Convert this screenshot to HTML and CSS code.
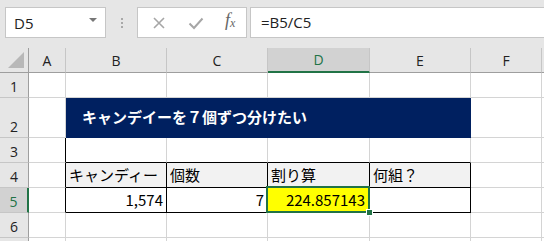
FILE: index.html
```html
<!DOCTYPE html>
<html lang="ja">
<head>
  <meta charset="UTF-8">
  <title>Excel</title>
  <link rel="stylesheet" href="styles.css">
</head>
<body>
  <div class="toolbar">
    <div class="name-box">
      <span>D5</span>
      <span class="caret"></span>
    </div>
    <div class="grip"><i></i><i></i><i></i></div>
    <div class="fx-buttons">
      <svg class="icon" width="14" height="14" viewBox="0 0 14 14"><path d="M2 2 L12 12 M12 2 L2 12" stroke="#a6a6a6" stroke-width="1.6" fill="none"/></svg>
      <svg class="icon" width="16" height="14" viewBox="0 0 16 14"><path d="M1.5 7.5 L6 12 L14.5 2.5" stroke="#a6a6a6" stroke-width="2" fill="none"/></svg>
      <span class="fx">f<sub>x</sub></span>
    </div>
    <div class="formula">=B5/C5</div>
  </div>

  <div class="sheet">
    <div class="corner"><span class="tri"></span></div>
    <div class="col-head">A</div>
    <div class="col-head">B</div>
    <div class="col-head">C</div>
    <div class="col-head active">D</div>
    <div class="col-head">E</div>
    <div class="col-head">F</div>
    <div class="col-head rest"></div>

    <div class="row-head">1</div>
    <div class="cell"></div><div class="cell"></div><div class="cell"></div><div class="cell"></div><div class="cell"></div><div class="cell"></div><div class="cell rest"></div>

    <div class="row-head">2</div>
    <div class="cell"></div>
    <div class="cell title">キャンデイーを７個ずつ分けたい</div>
    <div class="cell"></div><div class="cell rest"></div>

    <div class="row-head">3</div>
    <div class="cell left-of-table"></div>
    <div class="cell above-table"></div><div class="cell above-table"></div><div class="cell above-table"></div><div class="cell above-table"></div>
    <div class="cell"></div><div class="cell rest"></div>

    <div class="row-head">4</div>
    <div class="cell left-of-table"></div>
    <div class="cell table head">キャンディー</div>
    <div class="cell table head">個数</div>
    <div class="cell table head">割り算</div>
    <div class="cell table head">何組？</div>
    <div class="cell"></div><div class="cell rest"></div>

    <div class="row-head active">5</div>
    <div class="cell left-of-table"></div>
    <div class="cell table num">1,574</div>
    <div class="cell table num">7</div>
    <div class="cell table num selected">224.857143<span class="handle"></span></div>
    <div class="cell table"></div>
    <div class="cell"></div><div class="cell rest"></div>

    <div class="row-head">6</div>
    <div class="cell"></div><div class="cell"></div><div class="cell"></div><div class="cell"></div><div class="cell"></div><div class="cell"></div><div class="cell rest"></div>

    <div class="row-head"></div>
    <div class="cell"></div><div class="cell"></div><div class="cell"></div><div class="cell"></div><div class="cell"></div><div class="cell"></div><div class="cell rest"></div>
  </div>
</body>
</html>
```

FILE: styles.css
```css
body {
  margin: 0;
  padding: 0;
  width: 544px;
  height: 241px;
  overflow: hidden;
  background: #ffffff;
  font-family: "Noto Sans CJK JP", "Noto Sans", sans-serif;
}
.toolbar {
  display: flex;
  align-items: flex-start;
  height: 48px;
  padding-top: 7px;
  box-sizing: border-box;
  background: #e6e6e6;
}
.name-box {
  display: flex;
  align-items: center;
  justify-content: space-between;
  width: 101px;
  height: 31px;
  margin-left: 5px;
  padding: 0 8px 0 8px;
  box-sizing: border-box;
  background: #ffffff;
  border: 1px solid #c6c6c6;
  font-family: "Open Sans", "Noto Sans", sans-serif;
  font-size: 15px;
  color: #222222;
}
.caret {
  width: 0;
  height: 0;
  border-left: 4px solid transparent;
  border-right: 4px solid transparent;
  border-top: 4px solid #777777;
  margin-top: -6px;
}
.grip {
  display: flex;
  flex-direction: column;
  gap: 2px;
  width: 31px;
  align-items: center;
  padding-top: 11px;
}
.grip i {
  display: block;
  width: 2px;
  height: 2px;
  background: #a8a8a8;
}
.fx-buttons {
  display: flex;
  align-items: center;
  width: 110px;
  height: 31px;
  box-sizing: border-box;
  background: #ffffff;
  border: 1px solid #c6c6c6;
  padding-left: 14px;
}
.fx-buttons .icon:nth-child(2) {
  margin-left: 22px;
}
.fx {
  margin-left: 21px;
  font-family: "Liberation Serif", serif;
  font-style: italic;
  font-size: 18px;
  color: #666666;
  margin-top: -4px;
}
.fx sub {
  font-size: 12px;
  vertical-align: -1px;
}
.formula {
  flex: 1;
  height: 31px;
  margin-left: 3px;
  padding-left: 10px;
  box-sizing: border-box;
  background: #ffffff;
  border: 1px solid #c6c6c6;
  border-right: none;
  font-family: "Open Sans", "Noto Sans", sans-serif;
  font-size: 15px;
  line-height: 29px;
  color: #222222;
}

.sheet {
  display: grid;
  grid-template-columns: 29px 37px 101px 101px 102px 101px 71px 1fr;
  grid-template-rows: 25px 25px 40px 25px 25px 25px 25px 25px;
}
.sheet > div {
  box-sizing: border-box;
}
.corner {
  position: relative;
  background: #e6e6e6;
  border-right: 1px solid #9e9e9e;
  border-bottom: 1px solid #9e9e9e;
}
.tri {
  position: absolute;
  right: 4px;
  bottom: 4px;
  width: 0;
  height: 0;
  border-left: 16px solid transparent;
  border-bottom: 16px solid #b8b8b8;
}
.col-head {
  display: flex;
  align-items: center;
  justify-content: center;
  background: #e6e6e6;
  border-right: 1px solid #c6c6c6;
  border-bottom: 1px solid #9e9e9e;
  font-family: "Open Sans", "Noto Sans", sans-serif;
  font-size: 14px;
  color: #222222;
}
.col-head.active {
  background: #d2d2d2;
  color: #217346;
  border-bottom: 2px solid #217346;
}
.col-head.rest {
  border-right: none;
}
.row-head {
  display: flex;
  align-items: flex-end;
  justify-content: center;
  padding-bottom: 1px;
  background: #e6e6e6;
  border-right: 1px solid #9e9e9e;
  border-bottom: 1px solid #c6c6c6;
  font-family: "Open Sans", "Noto Sans", sans-serif;
  font-size: 14px;
  color: #222222;
}
.row-head.active {
  background: #d2d2d2;
  color: #217346;
  border-right: 2px solid #217346;
}
.cell {
  display: flex;
  align-items: flex-end;
  padding: 0 3px 1px 3px;
  border-right: 1px solid #d4d4d4;
  border-bottom: 1px solid #d4d4d4;
  font-size: 15px;
  line-height: 22px;
  color: #000000;
  white-space: nowrap;
}
.cell.rest {
  border-right: none;
}
.title {
  grid-column: span 4;
  align-items: center;
  padding: 0 0 2px 16px;
  background: #002060;
  border-color: #002060;
  color: #ffffff;
  font-weight: bold;
}
.left-of-table {
  border-right-color: #000000;
}
.above-table {
  border-bottom-color: #000000;
}
.table {
  border-right-color: #000000;
  border-bottom-color: #000000;
}
.head {
  background: #f2f2f2;
}
.num {
  justify-content: flex-end;
}
.selected {
  position: relative;
  background: #ffff00;
  padding-right: 4px;
}
.selected::after {
  content: "";
  position: absolute;
  left: -2px;
  top: -2px;
  right: -1px;
  bottom: -1px;
  border: 2px solid #217346;
}
.handle {
  position: absolute;
  right: -4px;
  bottom: -4px;
  width: 5px;
  height: 5px;
  background: #217346;
  border: 1px solid #ffffff;
  z-index: 2;
}
```
